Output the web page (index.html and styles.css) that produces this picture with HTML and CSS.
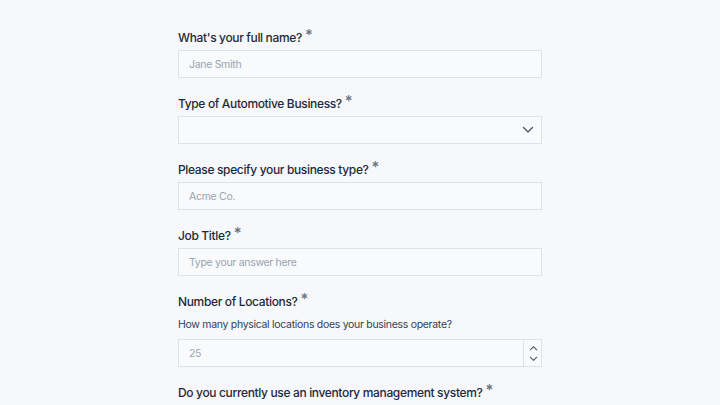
FILE: index.html
```html
<!DOCTYPE html>
<html>
    <head>
        <title>Automotive business survey</title>
        <meta charset="utf-8" />
        <meta name="viewport" content="width=device-width, initial-scale=1.0">
        <link rel="stylesheet" href="styles.css">
    </head>
    <body>
        <form class="survey">
            <div class="field">
                <label for="name">What's your full name?<span class="req">*</span></label>
                <input type="text" id="name" name="name" placeholder="Jane Smith" required>
            </div>
            <div class="field">
                <label for="business">Type of Automotive Business?<span class="req">*</span></label>
                <div class="select-wrap">
                    <select id="business" name="business" required>
                        <option value=""></option>
                        <option>Dealership</option>
                        <option>Repair shop</option>
                        <option>Other</option>
                    </select>
                    <svg class="chevron" viewBox="0 0 12 8" width="12" height="8"><path d="M1.5 1.5 6 6l4.5-4.5" fill="none" stroke="#4b5563" stroke-width="1.3" stroke-linecap="round" stroke-linejoin="round"/></svg>
                </div>
            </div>
            <div class="field">
                <label for="specify">Please specify your business type?<span class="req">*</span></label>
                <input type="text" id="specify" name="specify" placeholder="Acme Co." required>
            </div>
            <div class="field">
                <label for="title">Job Title?<span class="req">*</span></label>
                <input type="text" id="title" name="title" placeholder="Type your answer here" required>
            </div>
            <div class="field">
                <label for="locations">Number of Locations?<span class="req">*</span></label>
                <p class="help">How many physical locations does your business operate?</p>
                <div class="number-wrap">
                    <input type="text" id="locations" name="locations" placeholder="25" required>
                    <div class="spinner">
                        <svg viewBox="0 0 10 6" width="9" height="6"><path d="M1.5 5 5 1.5 8.5 5" fill="none" stroke="#4b5563" stroke-width="1.2" stroke-linecap="round" stroke-linejoin="round"/></svg>
                        <svg viewBox="0 0 10 6" width="9" height="6"><path d="M1.5 1 5 4.5 8.5 1" fill="none" stroke="#4b5563" stroke-width="1.2" stroke-linecap="round" stroke-linejoin="round"/></svg>
                    </div>
                </div>
            </div>
            <div class="field">
                <label for="inventory">Do you currently use an inventory management system?<span class="req">*</span></label>
            </div>
        </form>
    </body>
</html>
```

FILE: styles.css
```css
body {
    margin: 0;
    background: #f6f8fb;
    font-family: "Inter", "Noto Sans", sans-serif;
    color: #1f2937;
}

.survey {
    width: 364px;
    margin: 0 auto;
    padding-top: 27px;
}

.field {
    margin-bottom: 15px;
}

.field label {
    display: block;
    font-size: 12px;
    font-weight: 500;
    letter-spacing: -0.35px;
    line-height: 20px;
    height: 20px;
    padding-top: 1px;
    margin-bottom: 2px;
    color: #1e293b;
}

.req {
    color: #6b7280;
    font-size: 15px;
    line-height: 0;
    position: relative;
    top: -2px;
    margin-left: 3px;
}

.help {
    margin: 5px 0 6px;
    font-size: 10.5px;
    letter-spacing: -0.3px;
    line-height: 16px;
    color: #334155;
}

.field input,
.field select {
    display: block;
    width: 100%;
    height: 28px;
    box-sizing: border-box;
    padding: 0 10px;
    border: 1px solid #dde2e8;
    border-radius: 0;
    background: #f8fafc;
    font-family: inherit;
    font-size: 10.5px;
    letter-spacing: -0.3px;
    color: #1e293b;
    outline: none;
}

.field input::placeholder {
    color: #9aa3af;
}

.select-wrap,
.number-wrap {
    position: relative;
}

.field select {
    appearance: none;
}

.chevron {
    position: absolute;
    right: 8px;
    top: 10px;
    pointer-events: none;
}

.spinner {
    position: absolute;
    right: 0;
    top: 0;
    width: 18px;
    height: 28px;
    border-left: 1px solid #dde2e8;
    display: flex;
    flex-direction: column;
    align-items: center;
    justify-content: center;
    gap: 5px;
}
```
